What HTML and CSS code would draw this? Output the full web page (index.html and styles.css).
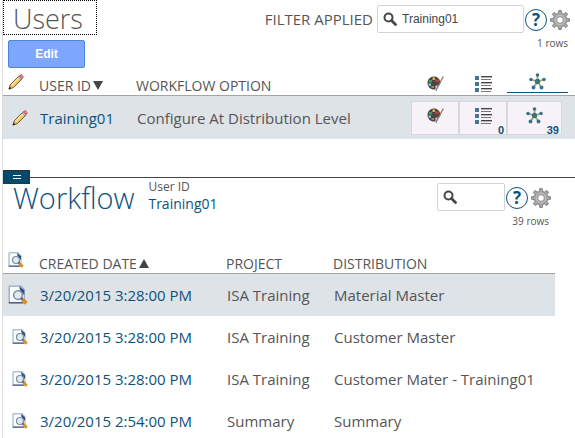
FILE: index.html
```html
<!DOCTYPE html>
<html lang="en">
<head>
<meta charset="utf-8">
<title>Users</title>
<link rel="stylesheet" href="styles.css">
</head>
<body>
<svg class="defs" aria-hidden="true">
  <symbol id="search" viewBox="0 0 14 14"><circle cx="5.5" cy="5.5" r="4" fill="none" stroke="#464646" stroke-width="2"/><path d="M8.5 8.5l4 4" stroke="#464646" stroke-width="2.8" stroke-linecap="round"/></symbol>
  <symbol id="gear" viewBox="0 0 20 20"><path d="M8.800 .5h2.400l.6 3 1.500.6 2.500-1.700 1.800 1.800-1.700 2.500.6 1.500 3 .6v2.400l-3 .6-.6 1.500 1.700 2.500-1.800 1.800-2.500-1.700-1.500.6-.6 3H8.800l-.6-3-1.500-.6-2.500 1.700-1.800-1.800 1.700-2.500-.6-1.500-3-.6V8.800l3-.6.6-1.500-1.700-2.500 1.800-1.800 2.500 1.700 1.500-.6z" fill="#a6a6a6" stroke="#7c7c7c" stroke-width=".9"/><circle cx="10" cy="10" r="4.800" fill="none" stroke="#c4c4c4" stroke-width="1"/><circle cx="10" cy="10" r="3.300" fill="#fff" stroke="#888" stroke-width=".8"/></symbol>
  <symbol id="pencil" viewBox="0 0 16 16"><path d="M1 15l1.500-4.500L11 2l3 3-8.500 8.500z" fill="#f7c566" stroke="#5f4a2c" stroke-width=".9"/><path d="M3 10.800L11 2.800l1 1-8 8z" fill="#ffe8a8"/><path d="M10 3l1.200-1.200 3 3L13 6z" fill="#b9c3c9" stroke="#68737a" stroke-width=".5"/><path d="M11.200 1.800c1-1.500 2-1.500 3.200-.4s1.200 2.200-.2 3.400z" fill="#ea7b86" stroke="#a6525a" stroke-width=".6"/><path d="M.6 15.400l.9-2.800 1.900 1.900z" fill="#222"/></symbol>
  <symbol id="palette" viewBox="0 0 17 16"><path d="M7 1C3 1 .5 4 .5 7.500c0 4 3 6.500 6.500 6.500 1.500 0 2-.8 1.600-1.800-.5-1.300.1-2.200 1.500-2.200 2.400 0 3.300-1.300 3.200-3C13 3.500 10.500 1 7 1z" fill="#484848"/><rect x="2" y="4.500" width="3" height="2.500" fill="#36a64a"/><rect x="5.500" y="2" width="2.500" height="2.500" fill="#e8b13d"/><rect x="8.500" y="4" width="3" height="2.500" fill="#e33b32"/><rect x="1.500" y="8" width="2.500" height="2.500" fill="#8db9dd"/><rect x="4.500" y="10.500" width="2.500" height="2" fill="#c97940"/><path d="M16.300 1l-4.500 8.500" stroke="#8b7765" stroke-width="1.300"/><path d="M12.500 8.500L9 15.500l1.500-6z" fill="#777" stroke="#777" stroke-width=".7"/></symbol>
  <symbol id="list" viewBox="0 0 17 17"><path d="M0 1h4v4H0zM0 7h4v4H0zM0 13h4v4H0z" fill="#4a7590"/><path d="M6 1h11v1H6zM6 7h11v1H6zM6 13h11v1H6z" fill="#444"/><path d="M6 2h11v1H6zM6 8h11v1H6zM6 14h11v1H6z" fill="#b5b5b5"/><path d="M6 4h10v1H6zM6 10h10v1H6zM6 16h10v1H6z" fill="#777"/></symbol>
  <symbol id="hub" viewBox="0 0 17 17"><path d="M8.500 8.500V2M8.500 8.500L2 6.500M8.500 8.500l6.500-2M8.500 8.500l-4 6M8.500 8.500l4 6" stroke="#9ead65" stroke-width="1.800"/><g fill="#3d718b"><circle cx="8.500" cy="8.500" r="2.700"/><circle cx="8.500" cy="2" r="1.800"/><circle cx="2" cy="6.500" r="1.800"/><circle cx="15" cy="6.500" r="1.800"/><circle cx="4.500" cy="14.500" r="1.900"/><circle cx="12.500" cy="14.500" r="1.900"/></g></symbol>
  <symbol id="view" viewBox="0 0 16 16"><path d="M1 .8h9.500l2.500 3V14H1z" fill="#fafcff" stroke="#93a5bf"/><path d="M.6 14.200h11.500" stroke="#4f6590" stroke-width="1.300"/><path d="M9 .8l4 3.500V8L9.500 4z" fill="#2f4c7d"/><circle cx="8" cy="8" r="3.500" fill="#dcebf4" stroke="#7e8d9b" stroke-width="1.200"/><path d="M10.300 10.300l1.600 1.600" stroke="#596271" stroke-width="2"/><path d="M11.500 11.500l3.200 3.200" stroke="#dc8f25" stroke-width="3"/></symbol>
</svg>

<main class="app">
  <section class="panel users">
    <header class="bar">
      <div class="lead">
        <h1 class="title focused">Users</h1>
        <button class="edit" type="button">Edit</button>
      </div>
      <div class="tools">
        <div class="tool-row">
          <label class="filter-label" for="user-filter">FILTER APPLIED</label>
          <div class="search"><svg class="i14"><use href="#search"/></svg><input id="user-filter" type="text" value="Training01"></div>
          <button class="help" type="button" aria-label="Help">?</button>
          <button class="icon-btn" type="button" aria-label="Settings"><svg class="i20"><use href="#gear"/></svg></button>
        </div>
        <p class="count">1 rows</p>
      </div>
    </header>
    <table class="grid users-grid">
      <colgroup><col class="c-icon"><col class="c-user"><col><col class="c-act"><col class="c-act"><col class="c-last"></colgroup>
      <thead>
        <tr>
          <th class="pick"><svg class="i16"><use href="#pencil"/></svg></th>
          <th><button class="sort" type="button">USER ID<span class="down"></span></button></th>
          <th>WORKFLOW OPTION</th>
          <th class="act"><svg class="i17"><use href="#palette"/></svg></th>
          <th class="act"><svg class="i17"><use href="#list"/></svg></th>
          <th class="act current"><span class="tab"><svg class="i17"><use href="#hub"/></svg></span></th>
        </tr>
      </thead>
      <tbody>
        <tr class="selected">
          <td class="pick shifted"><svg class="i16"><use href="#pencil"/></svg></td>
          <td><a href="#training01">Training01</a></td>
          <td>Configure At Distribution Level</td>
          <td><button class="tile" type="button" aria-label="Appearance"><svg class="i17"><use href="#palette"/></svg></button></td>
          <td><button class="tile" type="button" aria-label="Lists"><svg class="i17"><use href="#list"/></svg><span class="badge">0</span></button></td>
          <td><button class="tile wide" type="button" aria-label="Workflows"><svg class="i17"><use href="#hub"/></svg><span class="badge">39</span></button></td>
        </tr>
      </tbody>
    </table>
  </section>

  <section class="panel workflow">
    <button class="handle" type="button" aria-label="Resize panel"><span class="grip"></span></button>
    <header class="bar">
      <div class="lead heading">
        <h2 class="title link">Workflow</h2>
        <p class="context"><span>User ID</span><a href="#training01">Training01</a></p>
      </div>
      <div class="tools">
        <div class="tool-row">
          <div class="search short"><svg class="i14"><use href="#search"/></svg><input type="text" aria-label="Search workflow"></div>
          <button class="help" type="button" aria-label="Help">?</button>
          <button class="icon-btn" type="button" aria-label="Settings"><svg class="i20"><use href="#gear"/></svg></button>
        </div>
        <p class="count">39 rows</p>
      </div>
    </header>
    <table class="grid flow-grid">
      <colgroup><col class="c-icon"><col class="c-date"><col class="c-project"><col></colgroup>
      <thead>
        <tr>
          <th class="pick"><svg class="i16"><use href="#view"/></svg></th>
          <th><button class="sort" type="button">CREATED DATE<span class="up"></span></button></th>
          <th>PROJECT</th>
          <th>DISTRIBUTION</th>
        </tr>
      </thead>
      <tbody>
        <tr class="selected"><td class="pick"><svg class="i20"><use href="#view"/></svg></td><td><a href="#r1">3/20/2015 3:28:00 PM</a></td><td>ISA Training</td><td>Material Master</td></tr>
        <tr><td class="pick shifted"><svg class="i16"><use href="#view"/></svg></td><td><a href="#r2">3/20/2015 3:28:00 PM</a></td><td>ISA Training</td><td>Customer Master</td></tr>
        <tr><td class="pick shifted"><svg class="i16"><use href="#view"/></svg></td><td><a href="#r3">3/20/2015 3:28:00 PM</a></td><td>ISA Training</td><td>Customer Mater - Training01</td></tr>
        <tr><td class="pick shifted"><svg class="i16"><use href="#view"/></svg></td><td><a href="#r4">3/20/2015 2:54:00 PM</a></td><td>Summary</td><td>Summary</td></tr>
      </tbody>
    </table>
  </section>
</main>
</body>
</html>
```
FILE: styles.css
```css
* { box-sizing: border-box; }
html { overflow: hidden; }
body { margin: 0; background: #fff; color: #555; font-family: "Open Sans", "Noto Sans", sans-serif; font-size: 15px; }
h1, h2, p { margin: 0; }
button { padding: 0; border: 0; background: none; color: inherit; font: inherit; }
svg { display: block; flex: none; }
a { color: #0d527b; text-decoration: none; }
.defs { display: none; }
.i14 { width: 14px; height: 14px; }
.i16 { width: 16px; height: 16px; }
.i17 { width: 17px; height: 17px; }
.i20 { width: 20px; height: 20px; }

.app { margin-left: 2px; border-left: 1px solid #ddd; }
.users { min-height: 177px; }
.workflow { position: relative; border-top: 1px solid #444; }
.bar { display: flex; justify-content: space-between; height: 68px; }

.title { color: #555; font-size: 29px; font-weight: 300; line-height: 35px; }
.title.link { color: #0d527b; }
.title.focused { width: 94px; height: 35px; padding-left: 9px; border: 1px dotted #000; font-size: 27px; line-height: 36px; }
.edit { display: block; width: 77px; height: 28px; margin: 5px 0 0 5px; border: 1px solid #4d84dc; border-radius: 2px; background: #7da7ff; color: #fff; font: bold 12px "Liberation Sans", sans-serif; }

.tools { padding: 5px 5px 0 0; }
.workflow .tools { padding-right: 24px; }
.tool-row { display: flex; align-items: center; }
.filter-label { margin-right: 4px; font-size: 15px; }
.search { display: flex; align-items: center; gap: 5px; width: 147px; height: 28px; padding: 0 5px; border: 1px solid #d4d4d4; border-radius: 2px; }
.search.short { width: 68px; }
.search input { flex: 1; min-width: 0; padding: 0; border: 0; outline: 0; background: none; color: #444; font: 12px "Liberation Sans", sans-serif; }
.help { width: 22px; height: 22px; margin: 2px 3px 0 1px; border: 1px solid #0d527b; border-radius: 50%; color: #0d527b; font-size: 17px; font-weight: 700; line-height: 20px; }
.icon-btn { margin-top: 2px; }
.count { margin-top: 3px; padding-right: 2px; font-size: 10px; line-height: 14px; text-align: right; }

.heading { display: flex; align-items: flex-start; gap: 14px; padding-left: 10px; }
.context { display: flex; flex-direction: column; font-size: 12px; line-height: 17px; }
.context a { font-size: 14px; }
.heading .title { padding-top: 2px; }

.handle { position: absolute; left: 0; top: -8px; display: flex; align-items: center; justify-content: center; width: 27px; height: 14px; border: 1px solid #333; background: #004a6b; }
.grip { width: 8px; height: 4px; border: solid #fff; border-width: 1px 0; }

.grid { width: 100%; border-collapse: separate; border-spacing: 0; table-layout: fixed; }
.flow-grid { width: calc(100% - 20px); }
.grid th { height: 28px; padding: 8px 0 0; border-bottom: 1px solid #a5a5a5; font-size: 14px; font-weight: 400; line-height: 18px; text-align: left; white-space: nowrap; }
.grid td { height: 42px; padding: 0; white-space: nowrap; }
.grid td:nth-child(n+2) { padding-left: 1px; }
.grid .selected td { background: #dee3e7; }
.c-icon { width: 36px; }
.c-user { width: 97px; }
.c-act { width: 48px; }
.c-last { width: 68px; }
.c-date { width: 187px; }
.c-project { width: 107px; }
.grid .pick { padding-left: 5px; }
.grid .pick.shifted { padding-left: 9px; }
.grid th.pick { padding-top: 0; }
.sort { display: flex; align-items: center; gap: 2px; }
.up, .down { border: 5px solid transparent; }
.down { border-top: 9px solid #444; border-bottom: 0; }
.up { border-bottom: 9px solid #444; border-top: 0; }

.users-grid .selected td { height: 43px; }
.grid th.act { padding: 3px 0 0 16px; }
.grid th.act.current { padding: 5px 7px 0 0; vertical-align: top; }
.tab { display: flex; justify-content: center; height: 20px; border-bottom: 1px solid #0d527b; }
.users-grid td:nth-child(n+4) { padding: 0; }
.tile { position: relative; display: flex; justify-content: center; width: 48px; height: 34px; padding-top: 5px; border: 1px solid #d5d8dc; background: #f6f2f7; }
.tile.wide { width: 55px; }
.badge { position: absolute; right: 2px; bottom: -2px; color: #0d527b; font: bold 11px "Liberation Sans", sans-serif; }
```
